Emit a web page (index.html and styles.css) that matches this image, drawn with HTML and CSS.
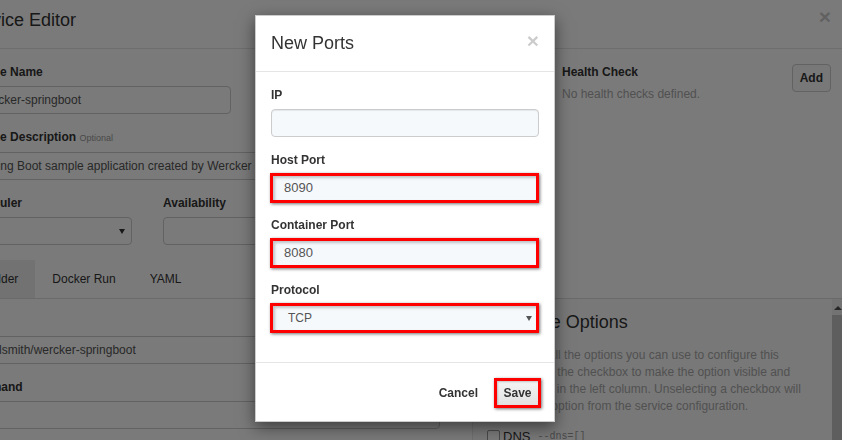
FILE: index.html
```html
<!DOCTYPE html>
<html>
<head>
<meta charset="utf-8">
<title>Service Editor - New Ports</title>
<link rel="stylesheet" href="styles.css">
</head>
<body>
<div class="editor">
  <div class="editor-header">
    <h2 class="editor-title">Service Editor</h2>
    <span class="editor-close">&times;</span>
  </div>
  <div class="editor-body">
    <div class="top-row">
      <div class="main-fields">
        <div class="group">
          <label class="lbl">Service Name</label>
          <input class="inp inp-name" value="wercker-springboot">
        </div>
        <div class="group">
          <label class="lbl">Service Description <small class="opt">Optional</small></label>
          <input class="inp" value="Spring Boot sample application created by Wercker">
        </div>
        <div class="sched-row">
          <div class="group sched">
            <label class="lbl">Scheduler</label>
            <div class="inp fake-select"></div>
          </div>
          <div class="group avail">
            <label class="lbl">Availability</label>
            <input class="inp">
          </div>
        </div>
      </div>
      <div class="health">
        <div class="health-text">
          <div class="lbl">Health Check</div>
          <div class="muted">No health checks defined.</div>
        </div>
        <button class="btn-add">Add</button>
      </div>
    </div>
    <div class="lower-row">
      <div class="lower-left">
        <ul class="tabs">
          <li class="tab active">Builder</li>
          <li class="tab">Docker Run</li>
          <li class="tab">YAML</li>
        </ul>
        <div class="tab-content">
          <div class="group">
            <label class="lbl">Image</label>
            <input class="inp" value="paulsmith/wercker-springboot">
          </div>
          <div class="group last">
            <label class="lbl">Command</label>
            <input class="inp">
          </div>
        </div>
      </div>
      <div class="options">
        <div class="options-inner">
          <h3 class="options-title">Available Options</h3>
          <p class="options-text">Shown are all the options you can use to configure this<br>service. Tick the checkbox to make the option visible and<br>configurable in the left column. Unselecting a checkbox will<br>remove the option from the service configuration.</p>
          <label class="check"><span class="box"></span><span class="check-name">DNS</span><code class="flag">--dns=[]</code></label>
        </div>
        <div class="scrollbar">
          <span class="sb-btn"><span class="sb-arrow"></span></span>
          <span class="sb-thumb"></span>
        </div>
      </div>
    </div>
  </div>
</div>

<div class="backdrop"></div>

<div class="modal">
  <div class="modal-header">
    <h4 class="modal-title">New Ports</h4>
    <span class="modal-close">&times;</span>
  </div>
  <div class="modal-body">
    <div class="mgroup">
      <label class="mlabel">IP</label>
      <div class="minput"></div>
    </div>
    <div class="mgroup hl-group">
      <label class="mlabel">Host Port</label>
      <div class="hl"><div class="hl-field">8090</div></div>
    </div>
    <div class="mgroup hl-group">
      <label class="mlabel">Container Port</label>
      <div class="hl"><div class="hl-field">8080</div></div>
    </div>
    <div class="mgroup hl-group">
      <label class="mlabel">Protocol</label>
      <div class="hl"><div class="hl-field hl-select">TCP</div></div>
    </div>
  </div>
  <div class="modal-footer">
    <span class="btn-cancel">Cancel</span>
    <span class="hl hl-save"><span class="btn-save">Save</span></span>
  </div>
</div>
</body>
</html>
```

FILE: styles.css
```css
* { box-sizing: border-box; }

html, body {
  margin: 0;
  padding: 0;
  width: 842px;
  height: 440px;
  overflow: hidden;
}

body {
  font-family: "Liberation Sans", Arial, sans-serif;
  font-size: 12px;
  line-height: 17px;
  color: #333;
  background: #fff;
}

/* ---------- background editor ---------- */
.editor {
  width: 897px;
  height: 440px;
  overflow: hidden;
  margin-left: -51px;
  background: #fff;
}

.editor-header {
  display: flex;
  justify-content: space-between;
  align-items: flex-start;
  height: 49px;
  padding: 10px 15px 0;
  border-bottom: 1px solid #e5e5e5;
}

.editor-title {
  margin: 0;
  font-size: 18px;
  line-height: 20px;
  font-weight: normal;
  color: #333;
}

.editor-close {
  font-size: 21px;
  line-height: 21px;
  font-weight: bold;
  color: #000;
  opacity: .2;
  margin-top: -4px;
}

.editor-body { padding: 15px 15px 0; }

.top-row {
  display: flex;
  justify-content: space-between;
}

.main-fields { width: 540px; }

.group { margin-bottom: 15px; }
.group.last { margin-bottom: 0; }

.lbl {
  display: block;
  font-weight: bold;
  margin-bottom: 5px;
}

.opt {
  font-size: 9px;
  font-weight: normal;
  color: #999;
}

.inp {
  display: block;
  width: 100%;
  height: 28px;
  padding: 0 14px;
  border: 1px solid #ccc;
  border-radius: 4px;
  background: #fff;
  font: 12px "Liberation Sans", Arial, sans-serif;
  color: #555;
}

.inp-name { width: 267px; }

.sched-row {
  display: flex;
  gap: 31px;
}

.sched { width: 168px; }
.avail { flex: 1; }

.fake-select { position: relative; }
.fake-select::after {
  content: "";
  position: absolute;
  right: 6px;
  top: 11px;
  border-left: 3px solid transparent;
  border-right: 3px solid transparent;
  border-top: 5px solid #333;
}

.health {
  width: 269px;
  display: flex;
  justify-content: space-between;
  align-items: flex-start;
}

.muted {
  color: #aaa;
  margin-top: 0;
}

.btn-add {
  height: 28px;
  padding: 0 7px;
  border: 1px solid #ccc;
  border-radius: 4px;
  background: #fafafa;
  font: bold 12px "Liberation Sans", Arial, sans-serif;
  color: #333;
}

.lower-row {
  display: flex;
  align-items: flex-start;
}

.lower-left { width: 476px; }

.tabs {
  list-style: none;
  margin: 0;
  padding: 0;
  display: flex;
  border-bottom: 1px solid #ddd;
}

.tab {
  padding: 0 17px;
  line-height: 38px;
  color: #333;
}

.tab.active { background: #eee; }

.tab-content { padding-top: 15px; }

.options {
  flex: 1;
  display: flex;
  height: 143px;
  overflow: hidden;
  margin: 38px -18px 0 32px;
  border-top: 1px solid #ddd;
  border-left: 1px solid #e8e8e8;
  background: #fbfbfb;
}

.options-inner {
  flex: 1;
  padding: 13px 15px 0 15px;
  white-space: nowrap;
}

.options-title {
  margin: 0 0 15px;
  font-size: 18px;
  line-height: 20px;
  font-weight: normal;
  color: #333;
}

.options-text {
  margin: 0 0 13px;
  color: #aaa;
}

.check {
  display: flex;
  align-items: center;
  gap: 3px;
  font-size: 13px;
}

.box {
  width: 13px;
  height: 13px;
  border: 1px solid #999;
  border-radius: 2px;
  background: #fff;
  margin-left: -1px;
}

.flag {
  font: 10px "Liberation Mono", monospace;
  color: #999;
  margin-left: 4px;
}

.scrollbar {
  width: 17px;
  display: flex;
  flex-direction: column;
  background: #f1f1f1;
}

.sb-btn {
  height: 16px;
  display: flex;
  justify-content: center;
  padding-top: 7px;
}

.sb-arrow {
  width: 0;
  height: 0;
  border-left: 4px solid transparent;
  border-right: 4px solid transparent;
  border-bottom: 4px solid #505050;
  margin-left: -6px;
}

.sb-thumb {
  flex: 1;
  background: #c4c4c4;
}

/* ---------- backdrop ---------- */
.backdrop {
  position: fixed;
  inset: 0;
  background: rgba(0, 0, 0, .52);
}

/* ---------- modal ---------- */
.modal {
  position: absolute;
  left: 255px;
  top: 15px;
  width: 300px;
  background: #fff;
  border: 1px solid rgba(0, 0, 0, .2);
  box-shadow: 0 5px 15px rgba(0, 0, 0, .5);
}

.modal-header {
  display: flex;
  justify-content: space-between;
  align-items: flex-start;
  padding: 15px;
  border-bottom: 1px solid #e5e5e5;
}

.modal-title {
  margin: 0;
  font-size: 18px;
  line-height: 25px;
  font-weight: normal;
  color: #333;
}

.modal-close {
  font-size: 21px;
  line-height: 21px;
  font-weight: bold;
  color: #000;
  opacity: .2;
  margin-top: -1px;
}

.modal-body { padding: 15px 15px 15px; }

.mgroup { margin-bottom: 15px; }
.hl-group { margin-bottom: 14px; }

.mlabel {
  display: block;
  font-weight: bold;
  line-height: 17px;
  margin-bottom: 5px;
}

.hl-group .mlabel { margin-bottom: 4px; }

.minput {
  height: 28px;
  border: 1px solid #ccc;
  border-radius: 4px;
  background: #f6f9fc;
  box-shadow: inset 0 1px 1px rgba(0, 0, 0, .075);
}

.hl {
  display: block;
  height: 30px;
  margin-left: -1px;
  border: 3px solid #f00;
  box-shadow: 1px 1px 3px rgba(0, 0, 0, .55);
}

.hl-field {
  position: relative;
  height: 100%;
  padding-left: 11px;
  background: #f6f9fc;
  box-shadow: inset 2px 2px 3px rgba(0, 0, 0, .22);
  font-size: 13px;
  line-height: 24px;
  color: #555;
}

.hl-select {
  padding-left: 15px;
  font-size: 12px;
}

.hl-select::after {
  content: "";
  position: absolute;
  right: 4px;
  top: 10px;
  border-left: 3px solid transparent;
  border-right: 3px solid transparent;
  border-top: 5px solid #555;
}

.modal-footer {
  display: flex;
  justify-content: flex-end;
  align-items: center;
  gap: 16px;
  padding: 15px 15px 13px;
  border-top: 1px solid #e5e5e5;
}

.btn-cancel {
  font-weight: bold;
  color: #333;
}

.hl-save {
  width: 47px;
  margin: 0 -2px 0 0;
}

.btn-save {
  display: block;
  height: 100%;
  text-align: center;
  line-height: 24px;
  font-weight: bold;
  color: #333;
  background: linear-gradient(#f4f4f4, #e2e2e2);
  box-shadow: inset 1px 1px 2px rgba(0, 0, 0, .2);
}
```
